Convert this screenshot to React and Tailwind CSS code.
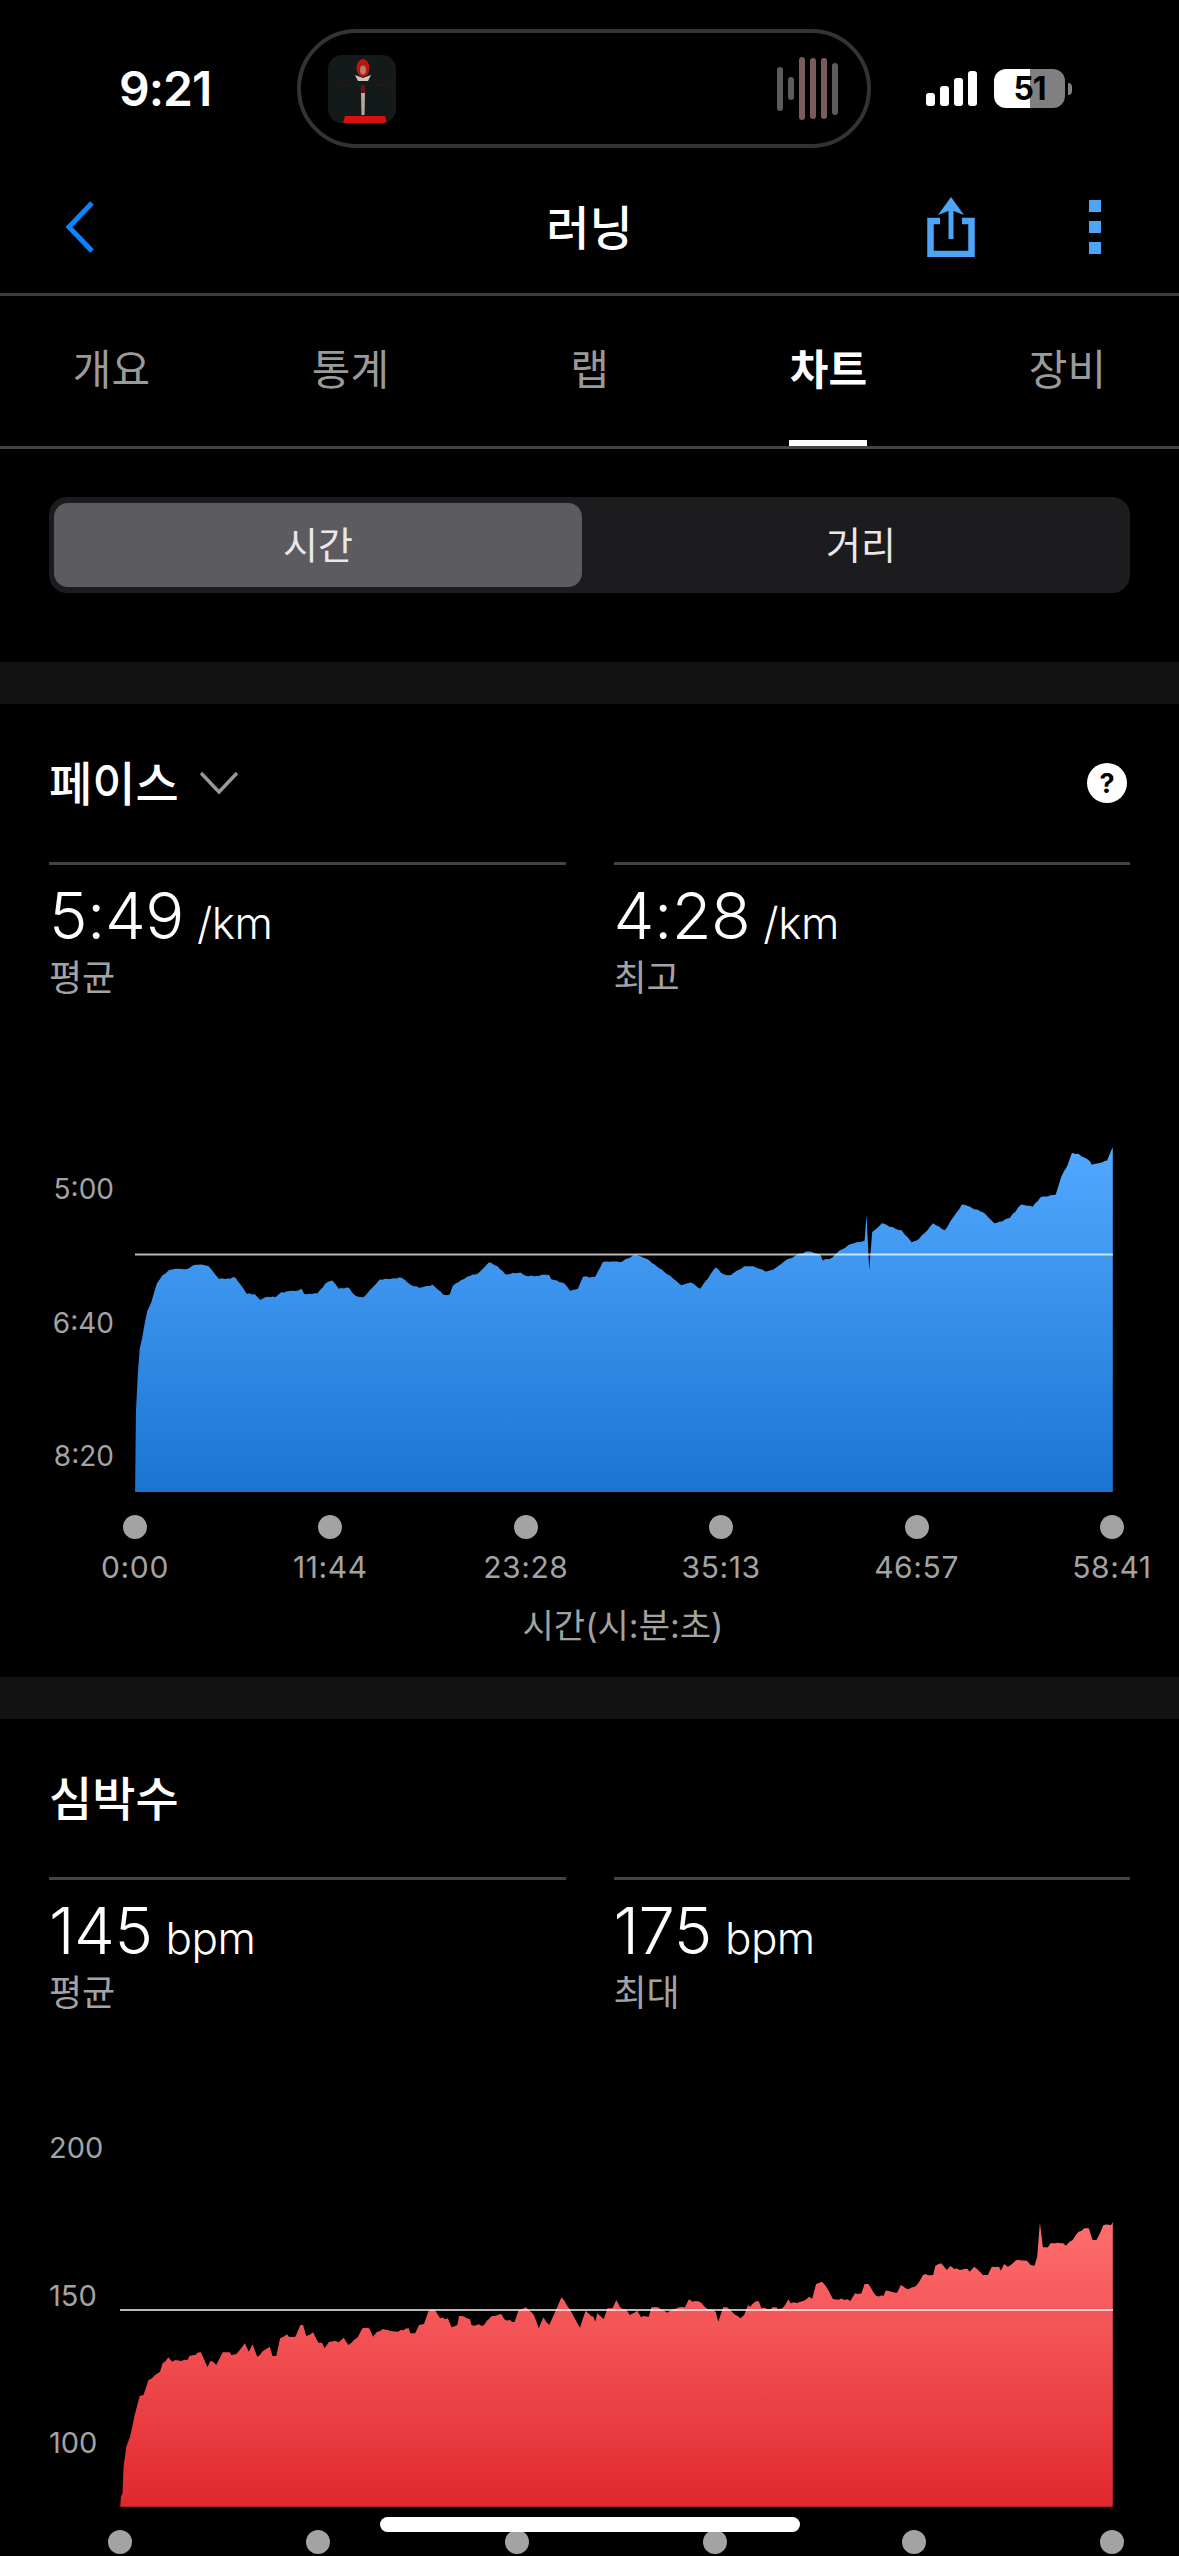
import React from "react";

const KR = "font-['Inter','Noto_Sans_CJK_KR',sans-serif]";

const blueL = [[353,1080],[355,850],[360,740],[365,665],[372,630],[378,590],[385,555],[395,530],[403,500],[410,475],[425,450],[440,437],[465,432],[490,433],[505,422],[525,420],[545,425],[560,445],[572,462],[595,460],[615,457],[630,480],[645,505],[665,505],[680,523],[700,513],[720,515],[735,500],[770,497],[788,490],[795,505],[815,505],[830,503],[850,475],[868,466],[885,490],[912,487],[928,510],[950,515],[975,485],[992,463],[1050,458],[1075,480],[1095,487],[1130,478],[1158,507],[1175,507],[1183,482],[1220,455],[1250,445],[1278,413],[1300,425],[1320,448],[1360,443],[1375,453],[1435,450],[1440,462],[1475,475],[1490,497],[1510,490]];
const blueR = [[0,475],[8,455],[40,455],[60,412],[105,413],[145,392],[175,403],[215,435],[265,480],[290,472],[315,490],[355,428],[375,447],[395,450],[430,425],[455,425],[485,440],[505,435],[535,410],[575,388],[600,382],[630,392],[635,408],[660,400],[680,378],[710,360],[745,350],[750,275],[757,435],[765,325],[790,300],[810,310],[842,320],[868,355],[888,345],[925,300],[955,320],[1000,245],[1015,250],[1055,268],[1085,300],[1125,285],[1155,245],[1185,252],[1205,225],[1245,217],[1250,200],[1260,165],[1275,135],[1288,95],[1305,98],[1335,120],[1340,130],[1380,118],[1392,85],[1395,80],[1395,1080]];
const redL = [[314,1220],[316,1190],[320,1180],[323,1100],[330,1040],[340,1010],[352,945],[365,888],[375,885],[388,840],[405,825],[418,815],[425,790],[440,772],[450,785],[458,780],[490,780],[495,768],[525,757],[542,802],[550,782],[565,795],[582,757],[600,757],[605,765],[618,762],[640,730],[650,755],[660,733],[672,770],[705,740],[712,768],[722,768],[732,715],[750,703],[755,710],[772,710],[785,675],[792,675],[800,708],[818,697],[832,728],[842,728],[848,745],[860,725],[875,722],[885,727],[898,713],[910,735],[935,712],[947,685],[965,685],[975,710],[985,695],[1000,687],[1040,695],[1068,685],[1072,700],[1085,700],[1095,675],[1108,672],[1120,632],[1138,632],[1150,655],[1170,655],[1180,682],[1195,675],[1200,648],[1228,658],[1232,675],[1265,675],[1285,648],[1310,642],[1318,658],[1345,665],[1355,630],[1375,622],[1395,645],[1408,685],[1420,652],[1435,675],[1467,592],[1490,630]];
const redR = [[0,683],[15,632],[35,650],[40,665],[45,640],[62,657],[72,625],[85,625],[95,600],[105,622],[125,635],[130,645],[150,632],[160,652],[180,650],[187,622],[205,622],[228,638],[260,622],[275,622],[285,598],[295,605],[310,604],[335,628],[355,635],[362,665],[375,622],[385,622],[420,655],[430,645],[440,615],[445,620],[460,604],[468,604],[475,625],[500,628],[503,622],[515,622],[518,628],[530,625],[545,598],[552,610],[590,600],[600,590],[608,596],[618,552],[633,545],[650,570],[662,597],[700,598],[708,603],[720,580],[737,580],[745,552],[755,552],[775,587],[795,587],[800,572],[830,578],[840,555],[860,568],[880,558],[898,525],[925,525],[930,498],[945,490],[960,510],[970,498],[980,507],[1015,507],[1020,515],[1032,500],[1055,525],[1068,525],[1078,500],[1097,500],[1102,512],[1110,492],[1120,500],[1140,482],[1170,482],[1180,495],[1190,497],[1197,470],[1204,368],[1212,442],[1225,442],[1232,430],[1265,430],[1272,437],[1290,420],[1305,395],[1320,385],[1332,385],[1342,420],[1352,420],[1370,376],[1390,376],[1395,366],[1395,1220]];

function rough(points, amp) {
  const out = [];
  for (let i = 0; i < points.length - 1; i++) {
    const [x0, y0] = points[i];
    const [x1, y1] = points[i + 1];
    const n = Math.floor((x1 - x0) / 2.5);
    out.push([x0, y0]);
    for (let k = 1; k < n; k++) {
      const t = k / n;
      const x = x0 + (x1 - x0) * t;
      const noise = Math.sin(x * 12.9898) * 43758.5453;
      out.push([x, y0 + (y1 - y0) * t + (noise - Math.floor(noise) - 0.5) * amp]);
    }
  }
  out.push(points[points.length - 1]);
  return out;
}

function toPath(left, right, ky, y0, bottom, amp) {
  const pts = [
    ...left.map(([x, y]) => [x / 2.613, y0 + y / ky]),
    ...right.map(([x, y]) => [580 + x / 2.618, y0 + y / ky]),
  ];
  const r = rough(pts, amp);
  return "M" + r.map(([x, y]) => `${x.toFixed(1)} ${Math.min(y, bottom).toFixed(1)}`).join("L") + "Z";
}

const bluePath = toPath(blueL, blueR, 2.904, 1120, 1492, 1.4);
const redPath = toPath(redL, redR, 3, 2100, 2507, 2);

function StatusBar() {
  const bars = [
    ["h-[44px]", "bg-[#5c5c5c]"],
    ["h-[23px]", "bg-[#5c5c5c]"],
    ["h-[63px]", "bg-[#7a5d5a]"],
    ["h-[61px]", "bg-[#7a5d5a]"],
    ["h-[61px]", "bg-[#7a5d5a]"],
    ["h-[52px]", "bg-[#5c5c5c]"],
  ];
  return (
    <div className="flex items-center h-[119px] mt-[29px] pl-[119px]">
      <div className="w-[178px] text-[48px] leading-none font-semibold text-white font-['Inter',sans-serif] tracking-[-1px]">9:21</div>
      <div className="w-[574px] h-[119px] rounded-full border-[4px] border-[#333333] flex items-center justify-between pl-[27px] pr-[29px]">
        <svg width="68" height="68" viewBox="0 0 68 68" className="rounded-[14px] shrink-0">
          <rect width="68" height="68" fill="#141a1a" />
          <ellipse cx="35" cy="13" rx="6.5" ry="9" fill="#b8160f" />
          <ellipse cx="35" cy="15" rx="3" ry="4.5" fill="#b97d6a" />
          <path d="M27 20 L35 23 L43 20 L40 26 L30 26Z" fill="#cfc8c0" />
          <path d="M33 30 L37 30 L37 40 L33 40Z" fill="#6e0f14" />
          <path d="M33 38 H37 L36.5 60 H33.5Z" fill="#b9a99c" />
          <path d="M13 30 H21 M49 30 H57" stroke="#3d1010" strokeWidth="2" />
          <path d="M15 68 L17 61 H57 L59 68Z" fill="#d90f10" />
        </svg>
        <div className="flex items-center gap-[5px]">
          {bars.map(([h, c], i) => (
            <div key={i} className={`w-[6px] rounded-full ${h} ${c}`} />
          ))}
        </div>
      </div>
      <div className="flex items-end gap-[5px] ml-[55px] h-[35px]">
        <div className="w-[9px] h-[13px] rounded-[3px] bg-white" />
        <div className="w-[9px] h-[20px] rounded-[3px] bg-white" />
        <div className="w-[9px] h-[28px] rounded-[3px] bg-white" />
        <div className="w-[9px] h-[35px] rounded-[3px] bg-white" />
      </div>
      <div className="ml-[17px] w-[71px] h-[39px] rounded-[12px] overflow-hidden flex items-center justify-center bg-[linear-gradient(90deg,#ffffff_0,#ffffff_36px,#808080_36px,#808080_100%)] text-black text-[32px] font-bold leading-none font-['Inter',sans-serif] tracking-[-1px]">51</div>
      <div className="ml-[3px] w-[4px] h-[12px] rounded-r-full bg-[#808080]" />
    </div>
  );
}

function Nav() {
  return (
    <div className={`grid grid-cols-[1fr_auto_1fr] items-center h-[148px] pt-[13px] border-b-[3px] border-[#3d3d3d] ${KR}`}>
      <div className="pl-[65px]">
        <svg width="30" height="52" viewBox="0 0 30 52" fill="none" className="block">
          <path d="M27 2 L4 26 L27 50" stroke="#0a84ff" strokeWidth="5" />
        </svg>
      </div>
      <div className="text-[47px] leading-none font-medium text-white">러닝</div>
      <div className="flex justify-end items-center gap-[114px] pr-[78px]">
        <svg width="48" height="60" viewBox="0 0 48 60" fill="none" className="block">
          <path d="M24 42 V10" stroke="#4ea5f8" strokeWidth="5" />
          <path d="M24 0 L37 18 L24 13 L11 18Z" fill="#4ea5f8" />
          <path d="M13 24 H3.5 V57 H44.5 V24 H35" stroke="#4ea5f8" strokeWidth="6.5" />
        </svg>
        <div className="flex flex-col gap-[9px]">
          <div className="w-[12px] h-[12px] bg-[#4ea5f8]" />
          <div className="w-[12px] h-[12px] bg-[#4ea5f8]" />
          <div className="w-[12px] h-[12px] bg-[#4ea5f8]" />
        </div>
      </div>
    </div>
  );
}

function Tabs() {
  const tabs = ["개요", "통계", "랩", "차트", "장비"];
  return (
    <div className={`flex justify-center h-[153px] border-b-[3px] border-[#444444] ${KR}`}>
      {tabs.map((t) => {
        const active = t === "차트";
        return (
          <div key={t} className="relative w-[239px] shrink-0 flex items-start justify-center pt-[52px]">
            <span className={`text-[42px] leading-[44px] ${active ? "text-white font-bold" : "text-[#9a9a9a]"}`}>{t}</span>
            {active && <div className="absolute bottom-0 left-[80px] w-[78px] h-[6px] bg-white" />}
          </div>
        );
      })}
    </div>
  );
}

function Segment() {
  return (
    <div className={`mx-[49px] mt-[48px] h-[96px] rounded-[18px] bg-[#1c1c1e] flex pl-[5px] pt-[6px] ${KR}`}>
      <div className="w-[528px] h-[84px] rounded-[14px] bg-[#5b5b60] flex items-center justify-center text-[38px] text-[#e8e8e8]">시간</div>
      <div className="flex-1 h-[84px] pl-[10px] flex items-center justify-center text-[38px] text-[#e8e8e8]">거리</div>
    </div>
  );
}

function Stat({ value, unit, label }) {
  return (
    <div className="flex-1 border-t-[3px] border-[#444444]">
      <div className="flex items-baseline gap-[13px] h-[91px] pt-[14px] text-white font-['Inter',sans-serif]">
        <span className="text-[65px] leading-[74px] font-[350] tracking-[-0.5px]">{value}</span>
        <span className="text-[44px] leading-[74px] font-[350] tracking-[-0.5px]">{unit}</span>
      </div>
      <div className={`h-[44px] text-[36px] leading-[44px] text-[#a3a3a3] ${KR}`}>{label}</div>
    </div>
  );
}

function Stats({ items }) {
  return (
    <div className="flex gap-[48px] px-[49px]">
      {items.map((s) => (
        <Stat key={s.label} {...s} />
      ))}
    </div>
  );
}

function Dots({ items, left, right }) {
  return (
    <div className={`flex justify-between mt-[23px] ${left} ${right}`}>
      {items.map((t, i) => (
        <div key={i} className="w-[24px] flex flex-col items-center">
          <div className="w-[24px] h-[24px] rounded-full bg-[#a3a3a3] shrink-0" />
          {t && <div className="mt-[8px] text-[30px] leading-[40px] whitespace-nowrap text-[#a3a3a3] tracking-[0.6px] font-['Inter',sans-serif]">{t}</div>}
        </div>
      ))}
    </div>
  );
}

function Band({ className }) {
  return <div className={`h-[42px] bg-[#121212] ${className}`} />;
}

function Pace() {
  return (
    <div>
      <div className={`h-[158px] flex items-center justify-between px-[49px] pr-[52px] ${KR}`}>
        <div className="flex items-center gap-[21px]">
          <span className="text-[47px] leading-none font-medium text-white">페이스</span>
          <svg width="38" height="22" viewBox="0 0 38 22" fill="none" className="block">
            <path d="M1 1 L19 20 L37 1" stroke="#999999" strokeWidth="3.5" />
          </svg>
        </div>
        <div className="w-[40px] h-[40px] rounded-full bg-white flex items-center justify-center text-black text-[27px] font-bold leading-none font-['Inter',sans-serif]">?</div>
      </div>
      <Stats items={[{ value: "5:49", unit: "/km", label: "평균" }, { value: "4:28", unit: "/km", label: "최고" }]} />
      <div className="flex mt-[140px] h-[352px]">
        <div className="w-[135px] shrink-0 pt-[29px] pb-[16px] pr-[21px] flex flex-col justify-between items-end text-[28px] leading-[40px] text-[#a3a3a3] font-['Inter',sans-serif]">
          <div>5:00</div>
          <div>6:40</div>
          <div>8:20</div>
        </div>
        <svg width="978" height="352" viewBox="135 1140 978 352" className="block shrink-0">
          <defs>
            <linearGradient id="blueFill" x1="0" y1="0" x2="0" y2="1">
              <stop offset="0" stopColor="#52a8ff" />
              <stop offset="1" stopColor="#1a75d2" />
            </linearGradient>
          </defs>
          <path d={bluePath} fill="url(#blueFill)" />
          <rect x="135" y="1253.5" width="978" height="2" fill="#ffffff" fillOpacity="0.72" />
        </svg>
      </div>
      <Dots items={["0:00", "11:44", "23:28", "35:13", "46:57", "58:41"]} left="ml-[123px]" right="mr-[55px]" />
      <div className={`mt-[17px] h-[44px] pl-[67px] text-center text-[34px] leading-[44px] text-[#a3a3a3] ${KR}`}>시간(시:분:초)</div>
    </div>
  );
}

function Heart() {
  return (
    <div>
      <div className={`h-[158px] flex items-center px-[49px] ${KR}`}>
        <span className="text-[47px] leading-none font-medium text-white">심박수</span>
      </div>
      <Stats items={[{ value: "145", unit: "bpm", label: "평균" }, { value: "175", unit: "bpm", label: "최대" }]} />
      <div className="flex mt-[113px] h-[379px]">
        <div className="w-[120px] shrink-0 pb-[44px] pl-[49px] flex flex-col justify-between text-[29px] leading-[40px] text-[#a3a3a3] font-['Inter',sans-serif]">
          <div>200</div>
          <div>150</div>
          <div>100</div>
        </div>
        <svg width="993" height="379" viewBox="120 2128 993 379" className="block shrink-0">
          <defs>
            <linearGradient id="redFill" x1="0" y1="0" x2="0" y2="1">
              <stop offset="0" stopColor="#ff6e6e" />
              <stop offset="1" stopColor="#e0282e" />
            </linearGradient>
          </defs>
          <path d={redPath} fill="url(#redFill)" />
          <rect x="120" y="2309" width="993" height="2" fill="#ffffff" fillOpacity="0.72" />
        </svg>
      </div>
      <Dots items={["", "", "", "", "", ""]} left="ml-[108px]" right="mr-[55px]" />
    </div>
  );
}

export default function App() {
  return (
    <div className="relative w-[1179px] h-[2556px] overflow-hidden bg-black flow-root">
      <StatusBar />
      <Nav />
      <Tabs />
      <Segment />
      <Band className="mt-[69px]" />
      <Pace />
      <Band className="mt-[29px]" />
      <Heart />
      <div className="absolute left-[380px] top-[2517px] w-[420px] h-[15px] rounded-full bg-white" />
    </div>
  );
}
